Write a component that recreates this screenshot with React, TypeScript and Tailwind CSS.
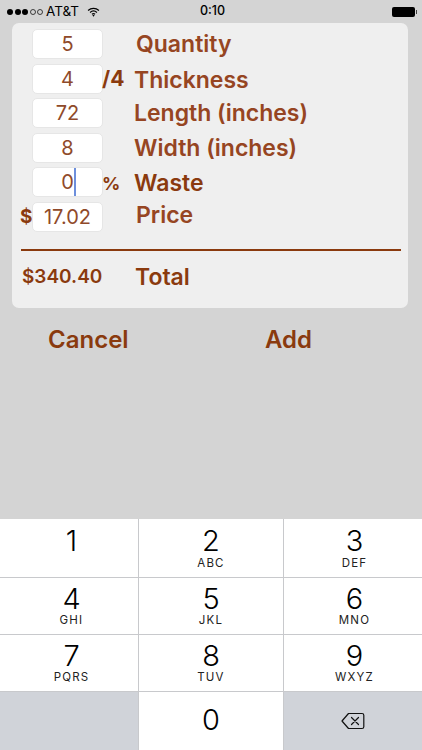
import React from 'react';

const font = { fontFamily: 'Inter, "Liberation Sans", sans-serif' };

const rows = [
  { value: '5', label: 'Quantity', labelClass: 'ml-[33px] mt-[1px] text-[#964522]' },
  { value: '4', suffix: '/4', label: 'Thickness', labelClass: 'ml-[31px] mt-[3px] text-[#964522]' },
  { value: '72', label: 'Length (inches)', labelClass: 'ml-[31px] mt-[1px] text-[#964522]' },
  { value: '8', label: 'Width (inches)', labelClass: 'ml-[31px] mt-[1px] text-[#964522]' },
  { value: '0', suffix: '%', caret: true, label: 'Waste', labelClass: 'ml-[31px] mt-[2px] text-[#8a3a0e]' },
  { value: '17.02', prefix: '$', label: 'Price', labelClass: 'ml-[33px] mt-[-3px] text-[#964522]' }
];

const keys = [
  { num: '1', letters: '', cell: 'pt-[8px] pl-[5px]', sub: 'mt-[2px]' },
  { num: '2', letters: 'ABC', cell: 'pt-[8px]', sub: 'mt-[2px]' },
  { num: '3', letters: 'DEF', cell: 'pt-[8px] pl-[3px]', sub: 'mt-[2px]' },
  { num: '4', letters: 'GHI', cell: 'pt-[7px] pl-[5px]', sub: 'mt-[1px]' },
  { num: '5', letters: 'JKL', cell: 'pt-[7px]', sub: 'mt-[1px]' },
  { num: '6', letters: 'MNO', cell: 'pt-[7px] pl-[3px]', sub: 'mt-[1px]' },
  { num: '7', letters: 'PQRS', cell: 'pt-[7px] pl-[5px]', sub: 'mt-[1px]' },
  { num: '8', letters: 'TUV', cell: 'pt-[7px]', sub: 'mt-[1px]' },
  { num: '9', letters: 'WXYZ', cell: 'pt-[7px] pl-[3px]', sub: 'mt-[1px]' }
];

const StatusBar = () => (
  <div className="h-[23px] flex items-center pl-[7px] pr-[5px] text-black text-[13.5px] relative">
    <div className="flex items-center gap-[1.5px]">
      {[0, 1, 2].map((i) => <span key={i} className="w-[6px] h-[6px] rounded-full bg-black" />)}
      {[0, 1].map((i) => <span key={i} className="w-[6px] h-[6px] rounded-full border border-black/70" />)}
    </div>
    <span className="ml-[3px]">AT&amp;T</span>
    <svg width="13" height="10" viewBox="0 0 14 11" className="ml-[8px]" fill="none" stroke="black" strokeWidth="1.3">
      <path d="M1 3.8C4.5.7 9.5.7 13 3.8" />
      <path d="M3.2 6C5.4 4.1 8.6 4.1 10.8 6" />
      <path d="M5.3 8C6.2 7.3 7.8 7.3 8.7 8" />
      <path d="M7 10.6 5.8 9.2C6.5 8.7 7.5 8.7 8.2 9.2Z" fill="black" stroke="none" />
    </svg>
    <span className="absolute left-0 right-0 text-center font-medium text-[12.5px] pl-[3px]">0:10</span>
    <div className="ml-auto flex items-center">
      <span className="w-[23px] h-[10px] rounded-[2px] bg-black" />
      <span className="w-[1px] h-[4px] bg-black/70 ml-[1px]" />
    </div>
  </div>
);

const Row = ({ value, prefix, suffix, caret, label, labelClass }: any) => (
  <div className="flex items-center h-[30px] mb-[4.6px]">
    <span className="w-[12px] text-[19px] leading-none font-bold text-[#8a3a0e]">{prefix}</span>
    <div className="w-[71px] h-[30px] shrink-0 bg-white rounded-[5px] border border-[#e6e6e6] flex items-center justify-center text-[#8f4a2a] text-[20px]">
      <span className="relative">
        {value}
        {caret && <span className="absolute left-full top-[1px] bottom-[1px] w-[2px] bg-[#6d8fdc]" />}
      </span>
    </div>
    <span className="w-0 whitespace-nowrap font-bold text-[#8a3a0e] text-[21px] leading-none">
      {suffix === '%' ? <span className="text-[18px] ml-[-1px]">%</span> : <span className="ml-[-1px]">{suffix}</span>}
    </span>
    <span className={`text-[23px] leading-none font-semibold whitespace-nowrap ${labelClass}`}>{label}</span>
  </div>
);

export default function App() {
  return (
    <div className="w-[422px] h-[750px] overflow-hidden bg-[#d4d4d4] flex flex-col" style={font}>
      <StatusBar />
      <div className="ml-[12px] mr-[14px] h-[285px] bg-[#efefef] rounded-[7px] pt-[6px] px-[8px] flex flex-col">
        {rows.map((r) => <Row key={r.label} {...r} />)}
        <div className="h-[2px] bg-[#8a3a0e] mt-[12px] ml-[1px] w-[380px]" />
        <div className="flex items-center mt-[13px] ml-[2px] text-[#8a3a0e] font-semibold">
          <span className="w-[113px] text-[19px] leading-[26px]">$340.40</span>
          <span className="text-[23px] leading-[26px]">Total</span>
        </div>
      </div>
      <div className="flex mt-[17px] text-[#8a3a0e] font-semibold text-[24px] leading-[30px]">
        <span className="ml-[48px] w-[217px]">Cancel</span>
        <span>Add</span>
      </div>
      <div className="mt-auto h-[231px] grid grid-cols-[138px_144px_1fr] grid-rows-[58px_56px_56px_58px] gap-[1px] bg-[#c8c9cc]">
        {keys.map((k) => (
          <div key={k.num} className={`bg-white flex flex-col items-center ${k.cell}`}>
            <span className="text-[29px] leading-[28px] text-black font-light">{k.num}</span>
            <span className={`text-[11.5px] leading-[13px] tracking-[1.2px] text-[#222] ${k.sub}`}>{k.letters}</span>
          </div>
        ))}
        <div className="bg-[#d0d3d9]" />
        <div className="bg-white flex items-center justify-center pb-[3px]">
          <span className="text-[29px] leading-none text-black font-light">0</span>
        </div>
        <div className="bg-[#d0d3d9] flex items-center justify-center">
          <svg width="24" height="18" viewBox="0 0 24 18" fill="none" stroke="#111" strokeWidth="1.2" strokeLinejoin="round" strokeLinecap="round">
            <path d="M7.5 1.5H21a1.8 1.8 0 0 1 1.8 1.8v11.4a1.8 1.8 0 0 1-1.8 1.8H7.5L1 9Z" />
            <path d="M10.5 5.5l7 7M17.5 5.5l-7 7" />
          </svg>
        </div>
      </div>
    </div>
  );
}
